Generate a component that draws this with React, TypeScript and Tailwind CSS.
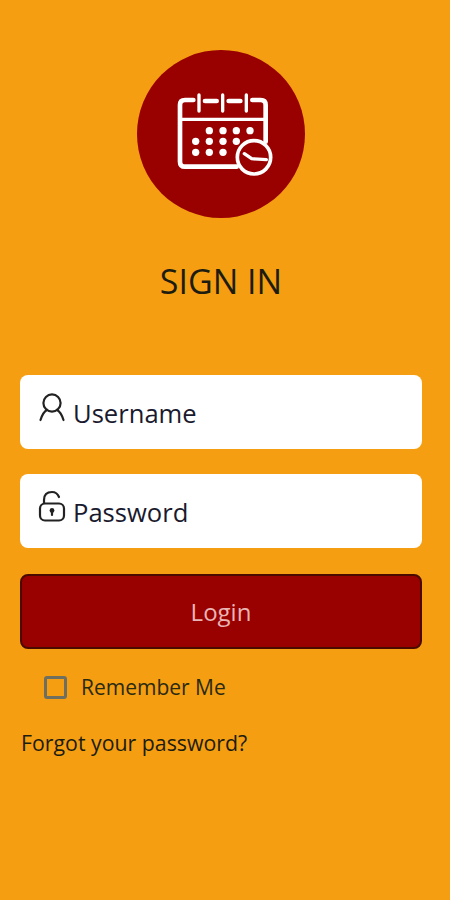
function Logo() {
  return (
    <div className="w-[168px] h-[168px] rounded-full bg-[#990000]">
      <svg viewBox="21 30 504 504" className="w-full h-full" fill="none" stroke="#fff" strokeLinecap="round">
        <path
          d="M190 180 H165 Q150 180 150 195 V365 Q150 380 165 380 H320 M225 183 H260 M296 183 H331 M367 180 H392 Q407 180 407 195 V305"
          strokeWidth="14"
        />
        <path d="M152 238 H405" strokeWidth="10" />
        <path d="M207 165 V213 M278 165 V213 M349 165 V213" strokeWidth="10" />
        <g fill="#fff" stroke="none">
          {[238, 279, 319, 360].map((x) => (
            <circle key={x} cx={x} cy="272" r="11" />
          ))}
          {[197, 238, 279, 319].map((x) => (
            <circle key={x} cx={x} cy="304" r="11" />
          ))}
          {[197, 238, 279].map((x) => (
            <circle key={x} cx={x} cy="337" r="11" />
          ))}
        </g>
        <circle cx="372" cy="352" r="50" fill="#990000" strokeWidth="11" />
        <path d="M343 341 L365 356 L409 359" strokeWidth="10" strokeLinejoin="round" />
      </svg>
    </div>
  );
}

function UserIcon() {
  return (
    <svg viewBox="0 0 28 34" className="w-[28px] h-[34px]" fill="none" stroke="#222" strokeWidth="2.2" strokeLinecap="round">
      <circle cx="14" cy="14" r="8.6" />
      <path d="M2.5 31 Q5 23 9 21 M25.5 31 Q23 23 19 21" />
    </svg>
  );
}

function OpenLock() {
  return (
    <svg viewBox="0 0 28 34" className="w-[28px] h-[34px]" fill="none" stroke="#222" strokeWidth="2.2" strokeLinecap="round">
      <rect x="2" y="15.5" width="24" height="17" rx="5" />
      <path d="M6 15 V12 Q6 4 14 4 Q19 4 21 9" />
      <circle cx="14" cy="22.5" r="2.4" fill="#222" stroke="none" />
      <path d="M14 23 V27" />
    </svg>
  );
}

function Field({ icon, label }: { icon: React.ReactNode; label: string }) {
  return (
    <div className="h-[74px] bg-white rounded-[8px] flex pl-[18px] text-[25.6px] text-[#1a1a2e]">
      <div className="w-[35px] pt-[14px]">{icon}</div>
      <span className="mt-[21px] leading-[36px]">{label}</span>
    </div>
  );
}

export default function App() {
  return (
    <div
      className="w-[450px] h-[900px] bg-[#f59e12] flex flex-col pt-[50px] pl-[20px] pr-[28px]"
      style={{ fontFamily: '"Open Sans", "Noto Sans", sans-serif' }}
    >
      <div className="flex flex-col items-center">
        <Logo />
        <h1 className="mt-[41px] text-[34px] leading-[44px] text-[#1c1c10]">SIGN IN</h1>
      </div>
      <div className="mt-[72px] flex flex-col gap-[25px]">
        <Field icon={<UserIcon />} label="Username" />
        <Field icon={<OpenLock />} label="Password" />
        <button className="mt-px h-[75px] bg-[#990000] border-2 border-[#4a0a00] rounded-[8px] text-[24px] text-[#e8b4b4]">
          Login
        </button>
      </div>
      <div className="mt-[24px] ml-[24px] flex items-center gap-[14px]">
        <span className="w-[23px] h-[23px] border-[3px] border-[#6f6f5f] rounded-[3px]" />
        <span className="text-[21px] leading-[28px] text-[#2a2a10]">Remember Me</span>
      </div>
      <a className="mt-[28px] ml-px text-[21.3px] leading-[28px] text-[#1c1c10]">Forgot your password?</a>
    </div>
  );
}
